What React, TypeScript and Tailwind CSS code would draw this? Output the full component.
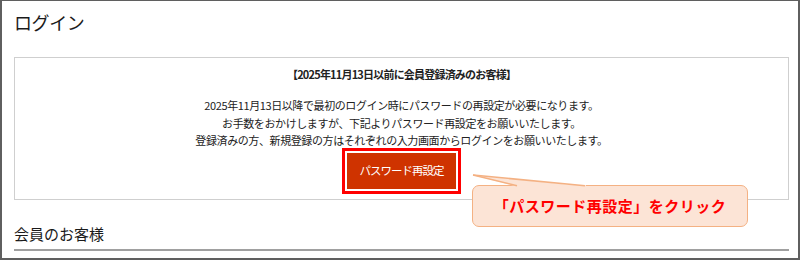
import React from 'react';

const jp = "font-['Noto_Sans_CJK_JP','Noto_Sans',sans-serif]";

// Callout annotation pointing at the reset button
const Callout: React.FC = () => (
  <>
    <div className="absolute left-[470px] top-[184px] w-[276px] h-[42px] rounded-[7px] border-[1.5px] border-[#f4b183] bg-[#fce4d6] flex items-center justify-center">
      <span className="text-[15px] font-bold tracking-[0.5px] text-[#ff0000]">「パスワード再設定」をクリック</span>
    </div>
    <svg className="absolute left-[460px] top-[168px]" width="140" height="24" viewBox="0 0 140 24">
      <polygon points="11,6 55,17.5 123,17.5" fill="#fce4d6" />
      <rect x="54" y="16" width="70" height="4" fill="#fce4d6" />
      <line x1="11" y1="6" x2="55" y2="16.8" stroke="#f4b183" strokeWidth="1.5" />
      <line x1="11" y1="6" x2="123" y2="16.8" stroke="#f4b183" strokeWidth="1.5" />
    </svg>
  </>
);

export default function App() {
  return (
    <div className={`relative w-[800px] h-[260px] overflow-hidden bg-white border-[#5f5f5f] border-t border-x-2 border-b-2 pl-[12px] pr-[9px] ${jp}`}>
      <h1 className="mt-[7px] h-[28px] leading-[28px] text-[18px] tracking-[-0.4px] text-[#1a1a1a]">ログイン</h1>

      <div className="mt-[21px] border border-[#cfcfcf] pt-[8px] pb-[10px] flex flex-col items-center text-[#222]">
        <p className="text-[11px] leading-[16px] font-bold tracking-[-0.8px]">【2025年11月13日以前に会員登録済みのお客様】</p>
        <div className="mt-[15px] text-[11px] leading-[17.5px] tracking-[-0.4px] text-center">
          <p>2025年11月13日以降で最初のログイン時にパスワードの再設定が必要になります。</p>
          <p>お手数をおかけしますが、下記よりパスワード再設定をお願いいたします。</p>
          <p>登録済みの方、新規登録の方はそれぞれの入力画面からログインをお願いいたします。</p>
        </div>
        <button className="mt-[3px] w-[109px] h-[36px] bg-[#cf3300] text-white text-[11.5px] tracking-[-1px] outline-[3px] outline-solid outline-[#ff0000] outline-offset-2">
          パスワード再設定
        </button>
      </div>

      <h2 className="mt-[22px] h-[24px] leading-[24px] text-[15px] text-[#1a1a1a] border-b-2 border-[#a0a0a0] pb-[3px] box-content">会員のお客様</h2>

      <Callout />
    </div>
  );
}
